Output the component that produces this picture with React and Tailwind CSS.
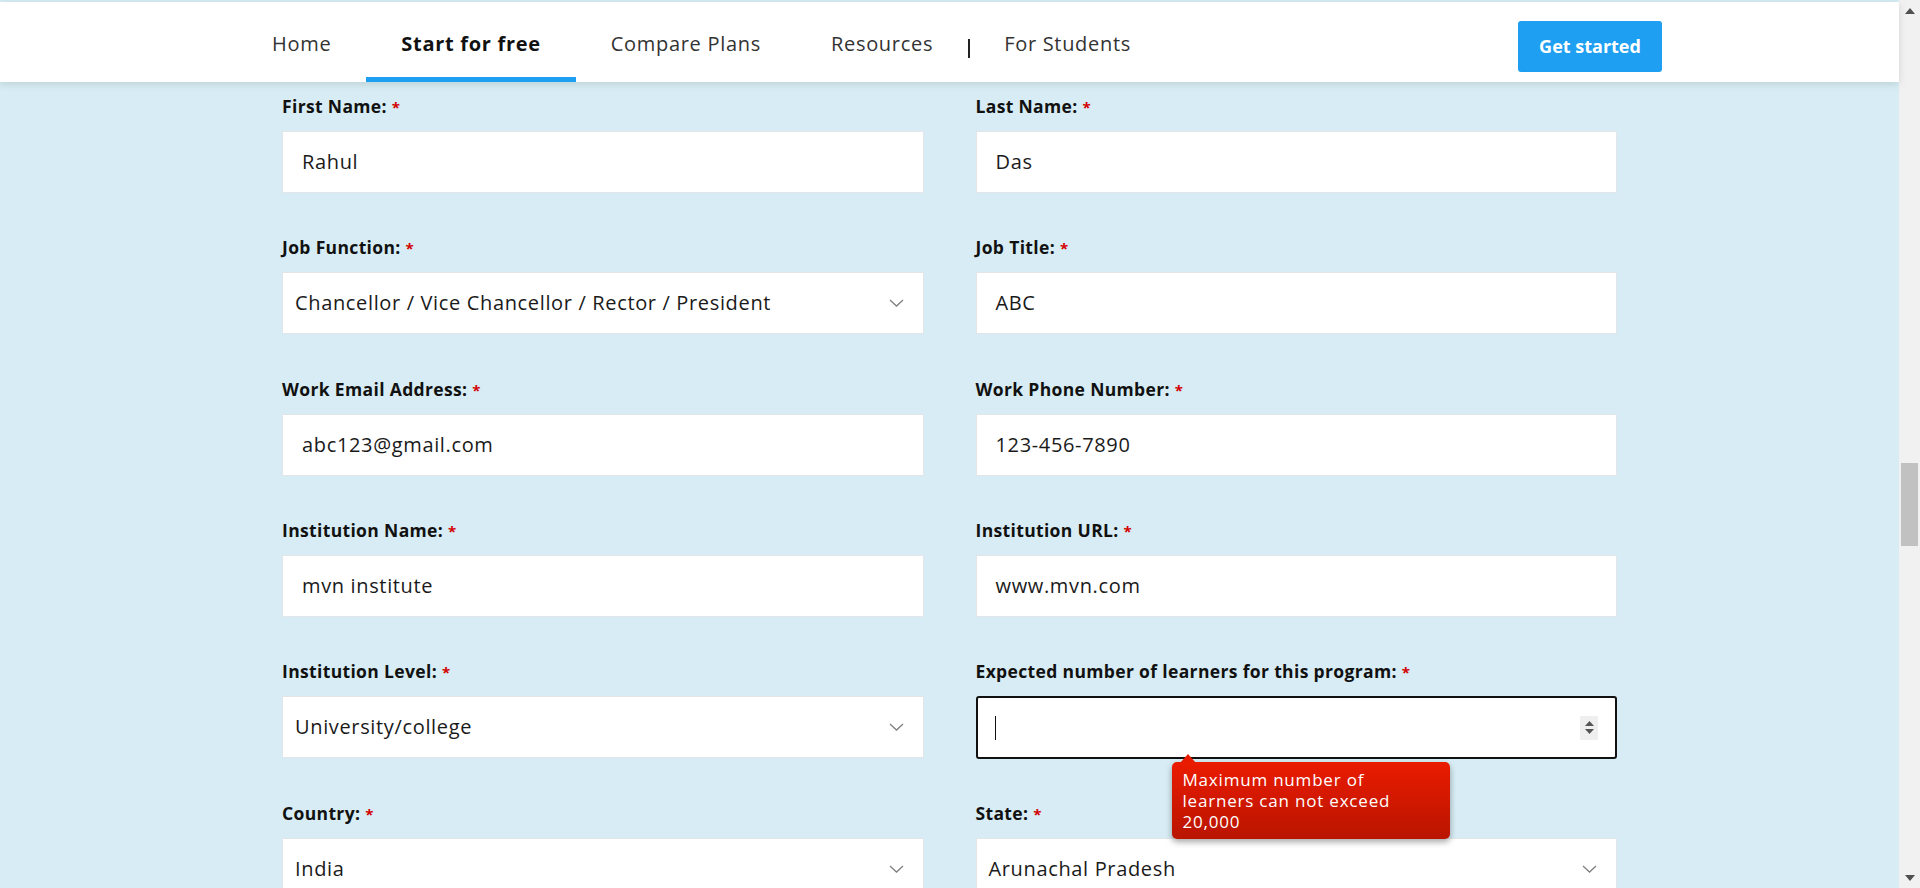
const FONT = "font-['Open_Sans',_'Liberation_Sans',_sans-serif]";

const navItems = [
  { label: "Home" },
  { label: "Start for free", active: true },
  { label: "Compare Plans" },
  { label: "Resources" },
];

// form fields, row by row (left, right)
const fields = [
  { label: "First Name:", value: "Rahul" },
  { label: "Last Name:", value: "Das" },
  { label: "Job Function:", value: "Chancellor / Vice Chancellor / Rector / President", select: true },
  { label: "Job Title:", value: "ABC" },
  { label: "Work Email Address:", value: "abc123@gmail.com" },
  { label: "Work Phone Number:", value: "123-456-7890" },
  { label: "Institution Name:", value: "mvn institute" },
  { label: "Institution URL:", value: "www.mvn.com" },
  { label: "Institution Level:", value: "University/college", select: true },
  { label: "Expected number of learners for this program:", value: "", focused: true },
  { label: "Country:", value: "India", select: true },
  { label: "State:", value: "Arunachal Pradesh", select: true },
];

const Label = ({ children }) => (
  <div className="h-[24px] leading-[24px] text-[17.5px] font-bold text-[#111] tracking-[0.35px]">
    {children} <span className="text-[#d40000] text-[15px]">*</span>
  </div>
);

const Chevron = () => (
  <svg width="15" height="8" viewBox="0 0 15 8" fill="none">
    <path d="M1 1l6.5 6L14 1" stroke="#808080" strokeWidth="1.3" />
  </svg>
);

const Spinner = () => (
  <div className="w-[18px] h-[24px] bg-[#efefef] flex flex-col items-center justify-center gap-[3px]">
    <svg width="9" height="5" viewBox="0 0 9 5">
      <path d="M4.5 0L9 5H0z" fill="#555" />
    </svg>
    <svg width="9" height="5" viewBox="0 0 9 5">
      <path d="M0 0h9L4.5 5z" fill="#555" />
    </svg>
  </div>
);

const Tooltip = () => (
  <div className="absolute left-[196px] top-[66px] w-[278px] z-10">
    <svg
      className="absolute -top-[8px] left-[8px]"
      width="16"
      height="9"
      viewBox="0 0 16 9"
    >
      <path d="M8 0L16 9H0z" fill="#e81a00" />
    </svg>
    <div className="rounded-[5px] bg-gradient-to-b from-[#ea1b00] to-[#b91500] px-[11px] py-[7px] text-[17px] leading-[21px] text-white tracking-[0.8px] shadow-[0_3px_6px_rgba(0,0,0,0.35)]">
      Maximum number of
      <br />
      learners can not exceed
      <br />
      20,000
    </div>
  </div>
);

const Field = ({ f }) => {
  if (f.focused) {
    return (
      <div>
        <Label>{f.label}</Label>
        <div className="relative mt-[13px]">
          <div className="h-[63px] bg-white border-2 border-[#111] rounded-[3px] flex items-center pl-[17px] pr-[17px]">
            <div className="w-[1px] h-[24px] bg-[#111]" />
            <div className="flex-1" />
            <Spinner />
          </div>
          <Tooltip />
        </div>
      </div>
    );
  }
  return (
    <div>
      <Label>{f.label}</Label>
      <div
        className={`mt-[13px] h-[62px] bg-white border border-[#e2e6e8] flex items-center text-[20px] text-[#1a1a1a] tracking-[0.65px] ${
          f.select ? "pl-[12px] pr-[19px] justify-between" : "pl-[19px]"
        }`}
      >
        <span>{f.value}</span>
        {f.select && <Chevron />}
      </div>
    </div>
  );
};

export default function App() {
  return (
    <div className={`flex h-[888px] overflow-hidden bg-[#d7ecf4] ${FONT}`}>
      <div className="flex-1 flex flex-col">
        <div className="h-[2px] shrink-0" />
        <header className="relative z-10 shrink-0 h-[80px] bg-white shadow-[0_2px_8px_rgba(0,0,0,0.12)] flex">
          <nav className="flex h-full pl-[237px]">
            {navItems.map((n) => (
              <div
                key={n.label}
                className={`h-full px-[35px] flex items-center pt-[9px] border-b-[5px] text-[20px] tracking-[0.7px] ${
                  n.active
                    ? "border-[#1e9ff2] font-bold text-[#111] tracking-[0.2px]"
                    : "border-transparent text-[#333]"
                }`}
              >
                {n.label}
              </div>
            ))}
            <div className="h-full flex items-center pt-[9px] border-b-[5px] border-transparent">
              <div className="w-[2px] h-[19px] mt-[8px] bg-[#222]" />
            </div>
            <div className="h-full px-[34px] flex items-center pt-[9px] border-b-[5px] border-transparent text-[20px] tracking-[0.7px] text-[#333]">
              For Students
            </div>
          </nav>
          <div className="flex-1" />
          <div className="pr-[237px] pt-[19px]">
            <button className="w-[144px] h-[51px] rounded-[3px] bg-[#1e9ff2] text-white font-bold text-[18px]">
              Get started
            </button>
          </div>
        </header>
        <main className="shrink-0 w-[1335px] mx-auto pt-[12px] grid grid-cols-2 gap-x-[52px] gap-y-[42.3px]">
          {fields.map((f) => (
            <Field key={f.label} f={f} />
          ))}
        </main>
      </div>
      <div className="w-[21px] bg-[#f1f1f1] flex flex-col">
        <div className="h-[21px] flex items-center justify-center">
          <svg width="10" height="6" viewBox="0 0 10 6">
            <path d="M5 0L10 6H0z" fill="#505050" />
          </svg>
        </div>
        <div className="flex-1 px-[2px]">
          <div className="mt-[442px] h-[83px] bg-[#c1c1c1]" />
        </div>
        <div className="h-[21px] flex items-center justify-center">
          <svg width="10" height="6" viewBox="0 0 10 6">
            <path d="M0 0h10L5 6z" fill="#505050" />
          </svg>
        </div>
      </div>
    </div>
  );
}
